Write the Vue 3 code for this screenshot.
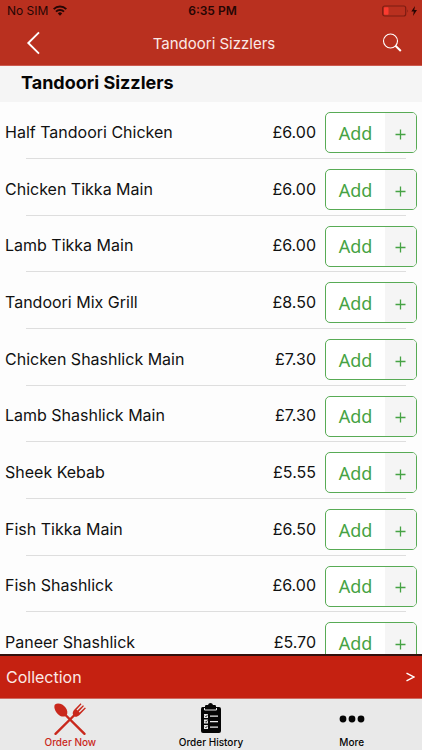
<script setup>
const items = [
  { name: 'Half Tandoori Chicken', price: '£6.00' },
  { name: 'Chicken Tikka Main', price: '£6.00' },
  { name: 'Lamb Tikka Main', price: '£6.00' },
  { name: 'Tandoori Mix Grill', price: '£8.50' },
  { name: 'Chicken Shashlick Main', price: '£7.30' },
  { name: 'Lamb Shashlick Main', price: '£7.30' },
  { name: 'Sheek Kebab', price: '£5.55' },
  { name: 'Fish Tikka Main', price: '£6.50' },
  { name: 'Fish Shashlick', price: '£6.00' },
  { name: 'Paneer Shashlick', price: '£5.70' },
]
</script>

<template>
  <div class="screen">
    <header class="top">
      <div class="status">
        <div class="carrier">
          <span>No SIM</span>
          <svg width="14" height="11" viewBox="0 0 14 11" aria-hidden="true">
            <g fill="none" stroke="currentColor" stroke-width="2">
              <path d="M.7 4.1a9 9 0 0 1 12.6 0" />
              <path d="M3 6.6a5.7 5.7 0 0 1 8 0" />
            </g>
            <path d="M4.8 8.4a3.2 3.2 0 0 1 4.4 0L7 10.8z" fill="currentColor" />
          </svg>
        </div>
        <span class="clock">6:35 PM</span>
        <div class="power">
          <svg width="36" height="12" viewBox="0 0 36 12" aria-hidden="true">
            <rect x=".7" y="1" width="23" height="10" rx="2" fill="none" stroke="#7d1c12" stroke-width="1.2" />
            <rect x="2" y="2.3" width="4.5" height="7.4" rx=".7" fill="#fb3b30" />
            <path d="M25.3 4.2q1.6 1.8 0 3.6z" fill="#7d1c12" />
            <path d="M33 1 29.300 6.600h2.500L31 11l4-5.900h-2.700z" fill="#260604" />
          </svg>
        </div>
      </div>
      <nav class="bar">
        <button class="icon-button" aria-label="Back">
          <svg width="14" height="24" viewBox="0 0 14 24">
            <path d="M13 1.300 2.300 12 13 22.700" fill="none" stroke="#fff" stroke-width="1.900" />
          </svg>
        </button>
        <span class="title">Tandoori Sizzlers</span>
        <button class="icon-button search" aria-label="Search">
          <svg width="20" height="20" viewBox="0 0 20 20" fill="none" stroke="#fff">
            <circle cx="8.500" cy="8" r="7" stroke-width="1.100" />
            <path d="m13.500 12.800 5.300 5.200" stroke-width="2" />
          </svg>
        </button>
      </nav>
    </header>

    <main class="menu">
      <h1 class="heading">Tandoori Sizzlers</h1>
      <ul class="list">
        <li v-for="item in items" :key="item.name" class="row">
          <span class="name">{{ item.name }}</span>
          <span class="price">{{ item.price }}</span>
          <button class="add">
            <span class="add-label">Add</span>
            <span class="plus">
              <svg width="11" height="11" viewBox="0 0 11 11" aria-hidden="true">
                <path d="M5.500 .5v10M.5 5.500h10" stroke="currentColor" stroke-width="1.300" />
              </svg>
            </span>
          </button>
        </li>
      </ul>
    </main>

    <button class="collection">
      <span>Collection</span>
      <svg width="9" height="10" viewBox="0 0 9 10" aria-hidden="true">
        <path d="M.5 1.200 7.800 5 .5 8.800" fill="none" stroke="#fff" stroke-width="1.400" />
      </svg>
    </button>

    <nav class="tabs">
      <a href="#order" class="tab active">
        <svg width="34" height="34" viewBox="0 0 34 34" aria-hidden="true">
          <g fill="currentColor">
            <path d="M2 2.600C4.800.4 10 2.100 12.700 5.700c2 2.800 2 5.600 1 7.400l-1.500 1.200c-2.500.8-5.300.1-7.700-2.500C1.700 8.700.5 4.700 2 2.600z" />
            <path d="M20.300 13.300c-1.200-2-.4-4.300 1.200-5.800L27.600 1.300l.9.900-5 5.500.9.800 5.600-5.300 1 .9-5.300 5.600.9.900 5.300-5.200 1 .9-6.400 6.600c-1.700 1.600-3.500 2.100-5 1.600z" />
          </g>
          <path d="M12 12.500 31.500 31.800M21 13.500 2.500 31.800" fill="none" stroke="currentColor" stroke-width="2.400" stroke-linecap="round" />
        </svg>
        <span>Order Now</span>
      </a>
      <a href="#history" class="tab">
        <svg width="34" height="34" viewBox="0 0 34 34" aria-hidden="true">
          <path d="M8.500 5H11V4.200q0-1.200 1.200-1.200H14q.5-2 2.500-2t2.500 2h1.800Q22 3 22 4.200V5h3q2 0 2 2v22q0 2-2 2H9q-2 0-2-2V7q0-2 1.500-2z" fill="currentColor" />
          <path d="M10.500 6v2h12V6" fill="none" stroke="#e9e9e9" />
          <g fill="#e9e9e9">
            <path d="M10 12h4v4h-4zM10 17.500h4v4h-4zM10 23h4v4h-4z" />
            <path d="M16 13.500h8v1.200h-8zM16 19h8v1.200h-8zM16 24.500h8v1.200h-8z" />
          </g>
          <path d="m11 13.800 1 1 1.500-2M11 19.300l1 1 1.500-2M11 24.800l1 1 1.500-2" fill="none" stroke="currentColor" stroke-width=".8" />
        </svg>
        <span>Order History</span>
      </a>
      <a href="#more" class="tab">
        <svg width="34" height="34" viewBox="0 0 34 34" aria-hidden="true">
          <g fill="currentColor">
            <circle cx="8" cy="17" r="3.400" />
            <circle cx="17" cy="17" r="3.400" />
            <circle cx="26" cy="17" r="3.400" />
          </g>
        </svg>
        <span>More</span>
      </a>
    </nav>
  </div>
</template>

<style>
body {
  background: #fdfdfd;
}
</style>

<style scoped>
.screen {
  display: flex;
  flex-direction: column;
  height: 100vh;
  overflow: hidden;
  color: #111;
  font-family: Inter, 'Liberation Sans', sans-serif;
}

button {
  margin: 0;
  padding: 0;
  border: 0;
  background: none;
  color: inherit;
  font: inherit;
  cursor: pointer;
}

svg {
  display: block;
}

.top {
  flex: none;
  background: #b9301f;
  border-bottom: 1px solid #cc5a4f;
}

.status {
  display: grid;
  grid-template-columns: 1fr auto 1fr;
  align-items: center;
  height: 21px;
  padding: 0 4px 0 7px;
  color: #260604;
  font-size: 12px;
}

.carrier {
  display: flex;
  align-items: center;
  gap: 5px;
}

.clock {
  font-weight: 600;
}

.power {
  display: flex;
  justify-content: flex-end;
}

.bar {
  display: grid;
  grid-template-columns: 1fr auto 1fr;
  align-items: center;
  height: 44px;
  padding: 0 20px 0 26px;
}

.icon-button {
  justify-self: start;
}

.search {
  justify-self: end;
}

.title {
  color: #fbe9e6;
  font-size: 15px;
}

.menu {
  flex: 1;
  min-height: 0;
  overflow: hidden;
  background: #fdfdfd;
}

.heading {
  margin: 0;
  padding: 0 21px 2px;
  background: #f5f5f5;
  color: #050505;
  font-size: 18px;
  font-weight: 700;
  line-height: 34px;
}

.list {
  margin: 0;
  padding: 0;
  list-style: none;
}

.row {
  display: grid;
  grid-template-columns: 1fr auto 92px;
  align-items: center;
  column-gap: 9px;
  height: 57px;
  box-sizing: border-box;
  padding: 4px 5px 0;
  background: linear-gradient(#dedede, #dedede) 26px 100% / calc(100% - 42px) 1px no-repeat;
  background-origin: border-box;
  font-size: 16px;
}

.row:nth-child(3n) {
  height: 56px;
}

.name,
.price {
  padding-bottom: 2px;
}

.add {
  display: grid;
  grid-template-columns: 1fr 31px;
  height: 41px;
  overflow: hidden;
  border: 1px solid #58ab55;
  border-radius: 5px;
  background: #fff;
  color: #46a344;
  font-family: 'Noto Sans', sans-serif;
  font-size: 18px;
}

.add-label,
.plus {
  display: flex;
  align-items: center;
  justify-content: center;
}

.plus {
  padding-top: 3px;
  background: #f5f5f5;
}

.collection {
  display: flex;
  flex: none;
  align-items: center;
  justify-content: space-between;
  height: 44px;
  padding: 0 7px 0 6px;
  border-top: 2px solid #31100d;
  background: #c52111;
  color: #fbe9e6;
  font-size: 16px;
}

.tabs {
  display: grid;
  flex: none;
  grid-template-columns: repeat(3, 1fr);
  height: 52px;
  box-sizing: border-box;
  border-top: 1px solid #cf6a61;
  background: #e9e9e9;
}

.tab {
  display: flex;
  flex-direction: column;
  align-items: center;
  padding-top: 3px;
  color: #050505;
  font-size: 10px;
  font-weight: 500;
  line-height: 13px;
  text-decoration: none;
}

.active {
  color: #c9281c;
}
</style>
